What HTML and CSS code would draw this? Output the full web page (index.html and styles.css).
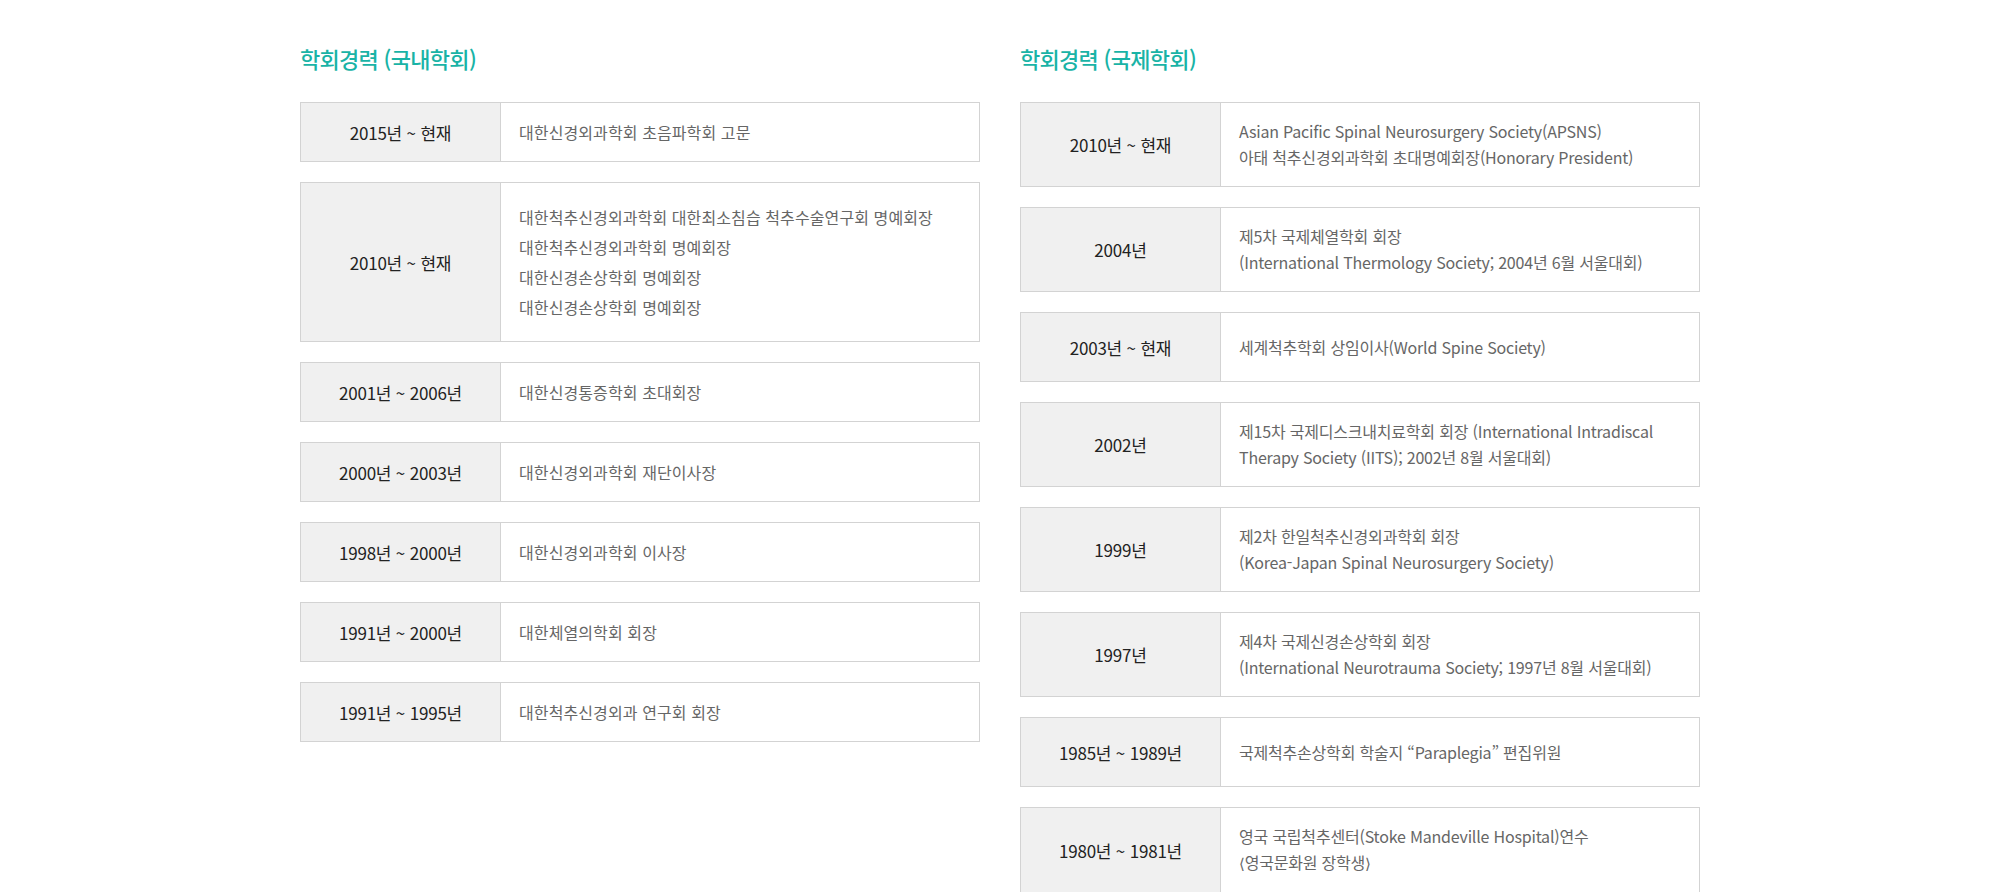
FILE: index.html
```html
<!DOCTYPE html>
<html lang="ko">
<head>
  <meta charset="UTF-8">
  <meta name="viewport" content="width=device-width, initial-scale=1.0">
  <title>학회경력</title>
  <link rel="stylesheet" href="styles.css">
</head>
<body>
  <div class="wrap">
    <div class="col domestic">
      <h2>학회경력 (국내학회)</h2>
      <div class="row">
        <div class="date">2015년 ~ 현재</div>
        <div class="desc">대한신경외과학회 초음파학회 고문</div>
      </div>
      <div class="row">
        <div class="date">2010년 ~ 현재</div>
        <div class="desc">
          <ul>
            <li>대한척추신경외과학회 대한최소침습 척추수술연구회 명예회장</li>
            <li>대한척추신경외과학회 명예회장</li>
            <li>대한신경손상학회 명예회장</li>
            <li>대한신경손상학회 명예회장</li>
          </ul>
        </div>
      </div>
      <div class="row">
        <div class="date">2001년 ~ 2006년</div>
        <div class="desc">대한신경통증학회 초대회장</div>
      </div>
      <div class="row">
        <div class="date">2000년 ~ 2003년</div>
        <div class="desc">대한신경외과학회 재단이사장</div>
      </div>
      <div class="row">
        <div class="date">1998년 ~ 2000년</div>
        <div class="desc">대한신경외과학회 이사장</div>
      </div>
      <div class="row">
        <div class="date">1991년 ~ 2000년</div>
        <div class="desc">대한체열의학회 회장</div>
      </div>
      <div class="row">
        <div class="date">1991년 ~ 1995년</div>
        <div class="desc">대한척추신경외과 연구회 회장</div>
      </div>
    </div>

    <div class="col international">
      <h2>학회경력 (국제학회)</h2>
      <div class="row">
        <div class="date">2010년 ~ 현재</div>
        <div class="desc">Asian Pacific Spinal Neurosurgery Society(APSNS)<br>아태 척추신경외과학회 초대명예회장(Honorary President)</div>
      </div>
      <div class="row">
        <div class="date">2004년</div>
        <div class="desc">제5차 국제체열학회 회장<br>(International Thermology Society; 2004년 6월 서울대회)</div>
      </div>
      <div class="row">
        <div class="date">2003년 ~ 현재</div>
        <div class="desc">세계척추학회 상임이사(World Spine Society)</div>
      </div>
      <div class="row">
        <div class="date">2002년</div>
        <div class="desc">제15차 국제디스크내치료학회 회장 (International Intradiscal<br>Therapy Society (IITS); 2002년 8월 서울대회)</div>
      </div>
      <div class="row">
        <div class="date">1999년</div>
        <div class="desc">제2차 한일척추신경외과학회 회장<br>(Korea-Japan Spinal Neurosurgery Society)</div>
      </div>
      <div class="row">
        <div class="date">1997년</div>
        <div class="desc">제4차 국제신경손상학회 회장<br>(International Neurotrauma Society; 1997년 8월 서울대회)</div>
      </div>
      <div class="row">
        <div class="date">1985년 ~ 1989년</div>
        <div class="desc">국제척추손상학회 학술지 “Paraplegia” 편집위원</div>
      </div>
      <div class="row">
        <div class="date">1980년 ~ 1981년</div>
        <div class="desc">영국 국립척추센터(Stoke Mandeville Hospital)연수<br><span class="bracket">⟨</span>영국문화원 장학생<span class="bracket">⟩</span></div>
      </div>
    </div>
  </div>
</body>
</html>
```

FILE: styles.css
```css
body {
  margin: 0;
  background: #ffffff;
  font-family: "Noto Sans CJK KR", "Noto Sans", sans-serif;
  color: #666666;
}
.wrap {
  width: 1400px;
  margin: 0 auto;
  padding-top: 44px;
  display: flex;
  align-items: flex-start;
  gap: 40px;
}
.col {
  flex: 1;
  display: flex;
  flex-direction: column;
  gap: 20px;
}
h2 {
  margin: 0 0 10px;
  font-size: 22px;
  line-height: 28px;
  font-weight: 500;
  letter-spacing: -0.7px;
  color: #19b3a6;
}
.row {
  display: grid;
  grid-template-columns: 200px 1fr;
  border: 1px solid #d3d3d3;
  box-sizing: border-box;
}
.date {
  display: flex;
  align-items: center;
  justify-content: center;
  background: #f0f0f0;
  border-right: 1px solid #d3d3d3;
  font-size: 17px;
  color: #222222;
  letter-spacing: -0.2px;
}
.desc {
  display: flex;
  align-items: center;
  font-size: 16px;
  letter-spacing: 0.1px;
}
.desc ul {
  margin: 0;
  padding: 19px 0;
  list-style: none;
}
.bracket {
  font-family: "DejaVu Sans", sans-serif;
  font-size: 15px;
}
.domestic .row {
  min-height: 60px;
}
.domestic .desc {
  padding: 0 18px;
  line-height: 30px;
}
.international .row {
  min-height: 70px;
}
.international .desc {
  display: block;
  padding: 15px 18px 16px;
  line-height: 26px;
  letter-spacing: -0.2px;
  align-self: center;
}
```
